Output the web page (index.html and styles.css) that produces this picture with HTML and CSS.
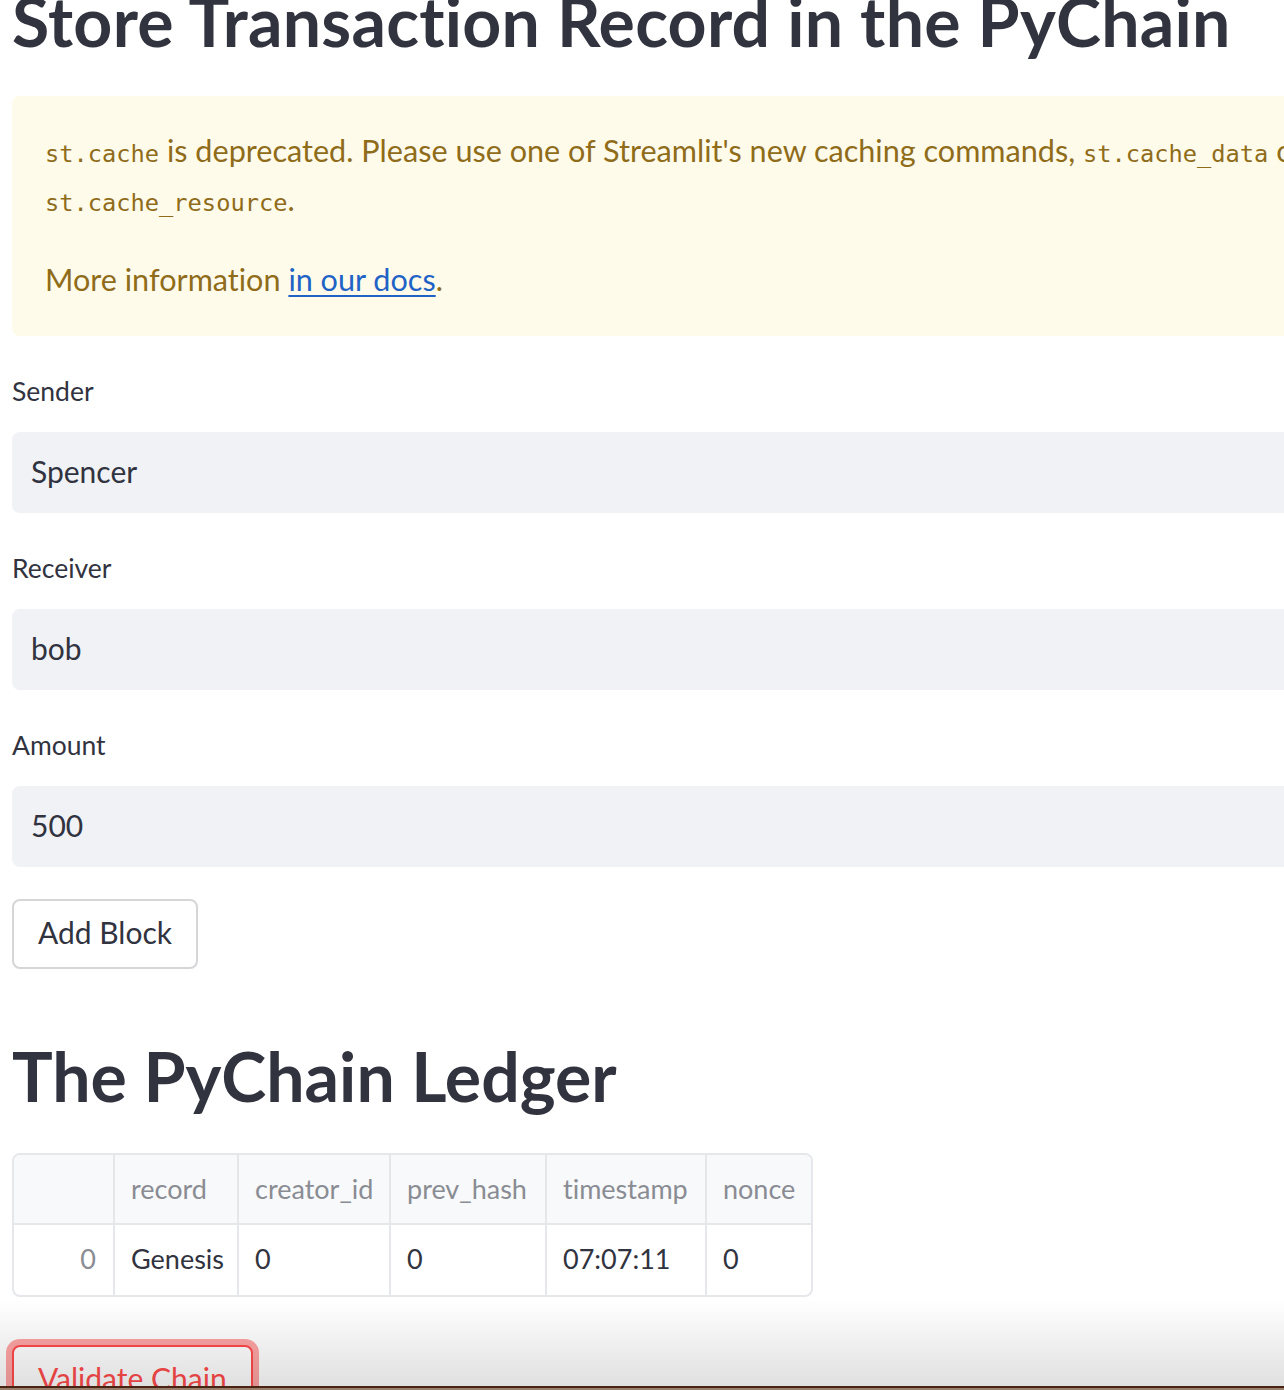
FILE: index.html
```html
<!DOCTYPE html>
<html lang="en">
<head>
<meta charset="utf-8">
<title>PyChain</title>
<link rel="stylesheet" href="styles.css">
</head>
<body>
<main class="page">
  <h1 class="title">Store Transaction Record in the PyChain</h1>

  <div class="alert">
    <p class="alert-p first"><code class="code">st.cache</code> is deprecated. Please use one of Streamlit's new caching commands, <code class="code">st.cache_data</code> or<br><code class="code">st.cache_resource</code>.</p>
    <p class="alert-p">More information <a class="link" href="#">in our docs</a>.</p>
  </div>

  <div class="field">
    <label class="label">Sender</label>
    <div class="input">Spencer</div>
  </div>
  <div class="field">
    <label class="label">Receiver</label>
    <div class="input">bob</div>
  </div>
  <div class="field">
    <label class="label">Amount</label>
    <div class="input">500</div>
  </div>

  <button class="btn btn-add" type="button">Add Block</button>

  <h2 class="subtitle">The PyChain Ledger</h2>

  <div class="grid">
    <div class="cell head"></div>
    <div class="cell head">record</div>
    <div class="cell head">creator_id</div>
    <div class="cell head">prev_hash</div>
    <div class="cell head">timestamp</div>
    <div class="cell head last">nonce</div>
    <div class="cell index">0</div>
    <div class="cell">Genesis</div>
    <div class="cell">0</div>
    <div class="cell">0</div>
    <div class="cell">07:07:11</div>
    <div class="cell last">0</div>
  </div>

  <button class="btn btn-focus" type="button">Validate Chain</button>
</main>
<div class="shade"></div>
</body>
</html>
```
FILE: styles.css
```css
html, body {
  margin: 0;
  padding: 0;
  height: 1390px;
  overflow: hidden;
  background: #ffffff;
}

body {
  font-family: Lato, "Noto Sans", sans-serif;
  font-variant-ligatures: no-common-ligatures;
  color: #31333f;
}

.page {
  width: 1500px;
  padding-left: 12px;
  display: flex;
  flex-direction: column;
  align-items: flex-start;
}

.title,
.subtitle {
  margin: 0;
  font-size: 68px;
  font-weight: 700;
  line-height: 82px;
  color: #31333f;
}

.title {
  margin-top: -20px;
  letter-spacing: 0.25px;
}

.subtitle {
  margin-top: 66px;
}

.alert {
  margin-top: 34px;
  align-self: stretch;
  background: #fffbea;
  color: #8f6c1a;
  border-radius: 8px;
  padding: 30px 33px 32px 33px;
  font-size: 30.6px;
  line-height: 49px;
}

.alert-p {
  margin: 0;
  white-space: nowrap;
}

.alert-p.first {
  margin-bottom: 31px;
}

.code {
  font-family: "DejaVu Sans Mono", "Liberation Mono", monospace;
  font-size: 23.7px;
  line-height: 1;
  color: #8f6c1a;
}

.link {
  color: #1f63c6;
  text-decoration: underline;
  text-decoration-thickness: 2px;
  text-underline-offset: 4px;
}

.field {
  margin-top: 35px;
  align-self: stretch;
  display: flex;
  flex-direction: column;
}

.label {
  font-size: 26.5px;
  line-height: 40px;
  height: 40px;
  margin-bottom: 21px;
  color: #31333f;
}

.input {
  height: 81px;
  box-sizing: border-box;
  background: #f0f2f6;
  border-radius: 8px;
  padding: 0 19px 4px 19px;
  display: flex;
  align-items: center;
  font-size: 30px;
  line-height: 36px;
  color: #31333f;
}

.btn {
  font-family: inherit;
  font-variant-ligatures: no-common-ligatures;
  font-size: 30px;
  line-height: 36px;
  height: 70px;
  box-sizing: border-box;
  padding: 0 24px 4px 24px;
  background: #ffffff;
  border: 2px solid #d6d6d9;
  border-radius: 8px;
  color: #31333f;
}

.btn-add {
  margin-top: 32px;
}

.btn-focus {
  margin-top: 48px;
  border-color: #ff4b4b;
  color: #ff4b4b;
  box-shadow: 0 0 0 6px rgba(255, 75, 75, 0.5);
}

.grid {
  margin-top: 36px;
  width: 801px;
  box-sizing: border-box;
  border: 2px solid #e6e7ea;
  border-radius: 8px;
  overflow: hidden;
  display: grid;
  grid-template-columns: 101px 124px 152px 156px 160px 1fr;
  grid-template-rows: 70px 70px;
  font-size: 27px;
}

.cell {
  box-sizing: border-box;
  border-right: 2px solid #e6e7ea;
  padding: 0 16px 3px 16px;
  display: flex;
  align-items: center;
  white-space: nowrap;
  color: #31333f;
}

.cell.last {
  border-right: none;
}

.cell.head {
  background: #f8f9fb;
  border-bottom: 2px solid #e6e7ea;
  color: #8a8c93;
  padding-bottom: 2px;
}

.cell.index {
  justify-content: flex-end;
  padding-right: 17px;
  color: #8a8c93;
}

.shade {
  position: fixed;
  left: 0;
  right: 0;
  top: 1300px;
  height: 90px;
  pointer-events: none;
  background: linear-gradient(to bottom,
    rgba(0, 0, 0, 0) 0px,
    rgba(0, 0, 0, 0.12) 86px,
    #4a2412 86px,
    #4a2412 88px,
    #9b7f6d 88px,
    #9b7f6d 90px);
}
```
